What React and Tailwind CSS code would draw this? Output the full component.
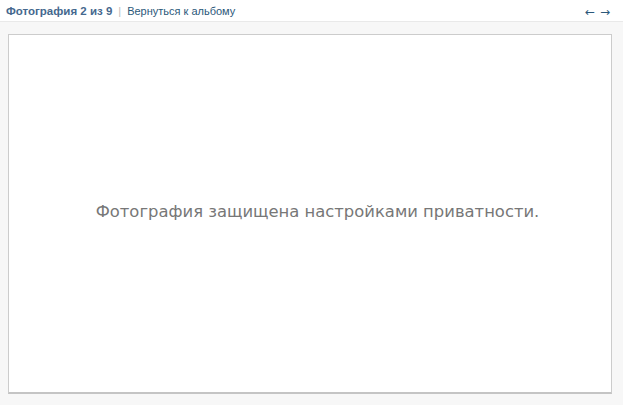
export default function App() {
  return (
    <div className="w-[623px] h-[405px] bg-[#f7f7f7] flex flex-col" style={{ fontFamily: "'DejaVu Sans', sans-serif" }}>
      <div className="h-[22px] bg-white border-b border-[#e9e9e9] flex items-center justify-between pl-[6px] pr-[13px] pt-[2px] text-[11px] font-['Liberation_Sans',sans-serif]">
        <div className="flex items-center">
          <span className="font-bold text-[#45688e] text-[11.5px]">Фотография 2 из 9</span>
          <span className="text-[#bcbcbc] mx-[6px]">|</span>
          <span className="text-[#2b587a]">Вернуться к альбому</span>
        </div>
        <div className="flex items-center gap-[5px] text-[#2b587a] text-[12px] font-['DejaVu_Sans',sans-serif]">
          <span>←</span>
          <span>→</span>
        </div>
      </div>
      <div className="flex-1 pl-[8px] pr-[11px] pt-[12px] pb-[11px] flex">
        <div className="flex-1 bg-white border border-[#cccccc] border-b-2 border-b-[#c4c4c4] flex items-center justify-center">
          <span className="text-[#777777] text-[16.4px] mt-[-2px] ml-[15px]">Фотография защищена настройками приватности.</span>
        </div>
      </div>
    </div>
  );
}
